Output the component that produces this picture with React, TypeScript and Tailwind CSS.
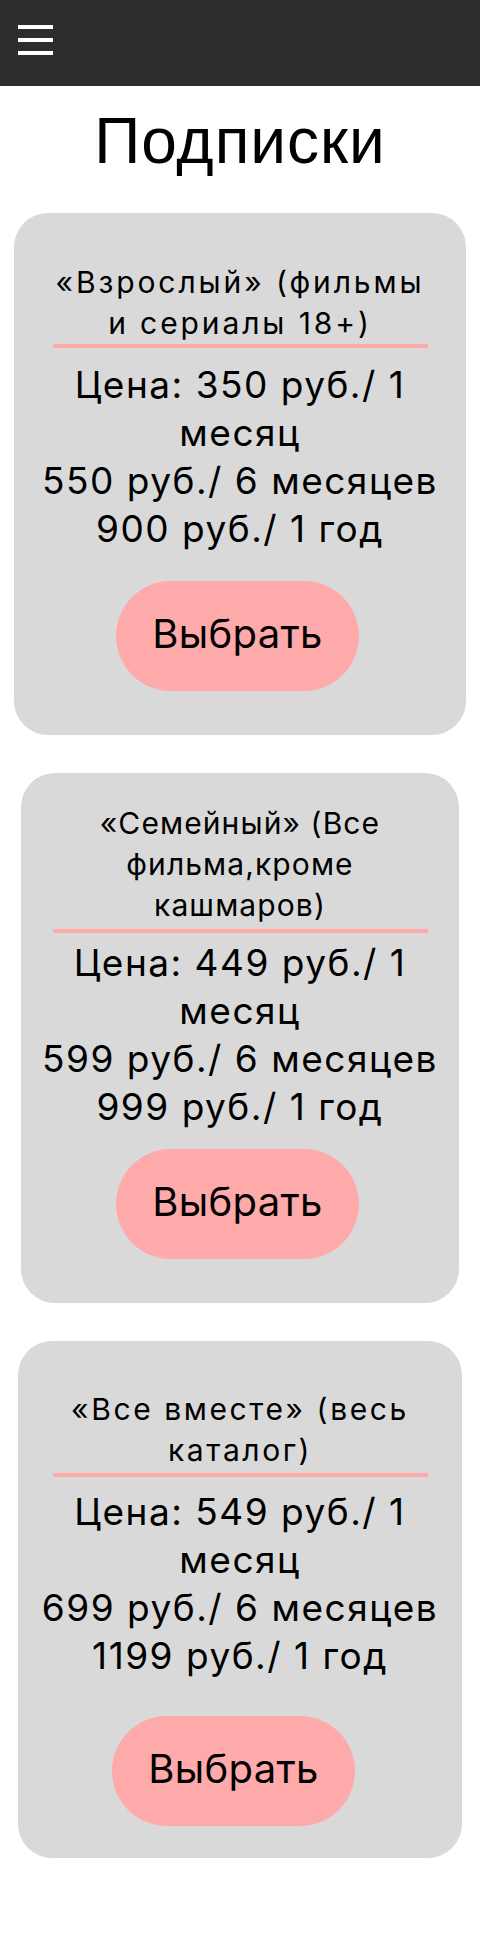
const plans = [
  {
    id: "adult",
    title: ["«Взрослый» (фильмы", "и сериалы 18+)"],
    prices: ["Цена: 350 руб./ 1", "месяц", "550 руб./ 6 месяцев", "900 руб./ 1 год"],
    card: "w-[452px] pt-[49px] pb-[44px]",
    heading: "tracking-[2.9px]",
    line: "mt-0",
    price: "mt-[13px]",
    button: "mt-[28px] mr-[5px]",
  },
  {
    id: "family",
    title: ["«Семейный» (Все", "фильма,кроме", "кашмаров)"],
    prices: ["Цена: 449 руб./ 1", "месяц", "599 руб./ 6 месяцев", "999 руб./ 1 год"],
    card: "w-[438px] pt-[30px] pb-[44px]",
    heading: "tracking-[1.1px]",
    line: "mt-[3px]",
    price: "mt-[6px]",
    button: "mt-[18px] mr-[5px]",
  },
  {
    id: "all",
    title: ["«Все вместе» (весь", "каталог)"],
    prices: ["Цена: 549 руб./ 1", "месяц", "699 руб./ 6 месяцев", "1199 руб./ 1 год"],
    card: "w-[444px] pt-[48px] pb-[32px]",
    heading: "tracking-[2.6px]",
    line: "mt-[2px]",
    price: "mt-[11px]",
    button: "mt-[36px] mr-[13px]",
  },
]

function PlanCard({ plan }: { plan: (typeof plans)[number] }) {
  return (
    <div className={`mx-auto flex flex-col items-center rounded-[34px] bg-[#d9d9d9] ${plan.card}`}>
      <div className="w-[375px]">
        <h2 className={`text-center text-[30px] leading-[41px] font-normal text-black ${plan.heading}`}>
          {plan.title.map((t, i) => (
            <span key={i} className="block whitespace-nowrap">
              {t}
            </span>
          ))}
        </h2>
        <div className={`h-[4px] w-full bg-[#ffaaaa] ${plan.line}`} />
      </div>
      <p className={`text-center text-[37px] leading-[48px] tracking-[1.5px] text-black ${plan.price}`}>
        {plan.prices.map((t, i) => (
          <span key={i} className="block whitespace-nowrap">
            {t}
          </span>
        ))}
      </p>
      <button
        className={`flex h-[110px] w-[243px] items-center justify-center rounded-full bg-[#ffaaaa] pb-[4px] text-[40px] leading-none tracking-[0.3px] text-black ${plan.button}`}
      >
        Выбрать
      </button>
    </div>
  )
}

export default function App() {
  return (
    <div className="min-h-[1939px] bg-white font-['Inter',sans-serif] pb-[83px]">
      <header className="h-[86px] bg-[#2d2d2d] px-[18px] pt-[25px]">
        <button className="flex flex-col gap-[9px]" aria-label="Меню">
          <span className="block h-[4px] w-[35px] bg-white" />
          <span className="block h-[4px] w-[35px] bg-white" />
          <span className="block h-[4px] w-[35px] bg-white" />
        </button>
      </header>
      <h1 className="mt-[18px] text-center font-['Liberation_Sans',Arial,sans-serif] text-[64px] leading-[74px] font-normal tracking-[1px] text-black">
        Подписки
      </h1>
      <main className="mt-[35px] flex flex-col gap-[38px]">
        {plans.map((p) => (
          <PlanCard key={p.id} plan={p} />
        ))}
      </main>
    </div>
  )
}
